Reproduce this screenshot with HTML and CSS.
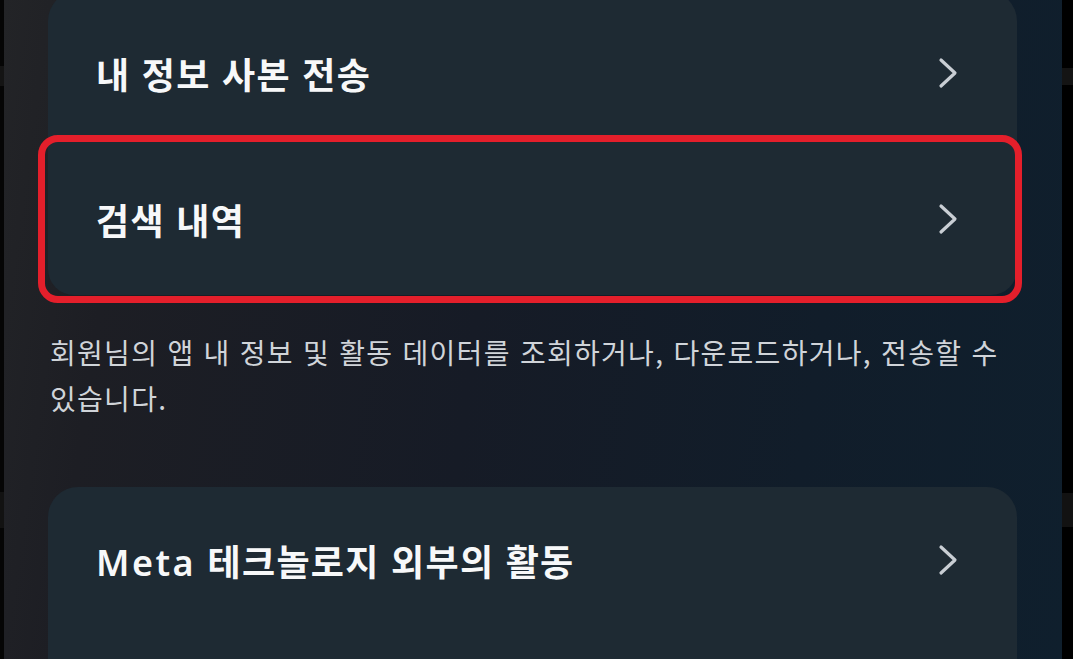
FILE: index.html
```html
<!DOCTYPE html>
<html lang="ko">
<head>
<meta charset="utf-8">
<title>내 정보</title>
<link rel="stylesheet" href="styles.css">
</head>
<body>
<div class="frame">
  <div class="edge edge-left"></div>
  <main class="screen">
    <section class="group">
      <a class="item item-first" href="#">
        <span class="item-title">내 정보 사본 전송</span>
        <svg class="chev" viewBox="0 0 20 32" width="20" height="32" aria-hidden="true"><path d="M3 3 L17 16 L3 29"/></svg>
      </a>
      <a class="item item-last" href="#">
        <span class="item-title">검색 내역</span>
        <svg class="chev" viewBox="0 0 20 32" width="20" height="32" aria-hidden="true"><path d="M3 3 L17 16 L3 29"/></svg>
        <span class="highlight"></span>
      </a>
    </section>
    <p class="desc">회원님의 앱 내 정보 및 활동 데이터를 조회하거나, 다운로드하거나, 전송할 수 있습니다.</p>
    <section class="group group-single">
      <a class="item item-solo" href="#">
        <span class="item-title"><span class="latin">Meta</span> 테크놀로지 외부의 활동</span>
        <svg class="chev" viewBox="0 0 20 32" width="20" height="32" aria-hidden="true"><path d="M3 3 L17 16 L3 29"/></svg>
      </a>
    </section>
  </main>
  <div class="edge edge-right"></div>
</div>
</body>
</html>
```

FILE: styles.css
```css
* { box-sizing: border-box; }

html, body {
  margin: 0;
  padding: 0;
  background: #000;
}

body {
  font-family: "Noto Sans CJK KR", "Noto Sans", sans-serif;
  width: 1073px;
  height: 659px;
  overflow: hidden;
}

.frame {
  display: flex;
  height: 659px;
}

.edge-left {
  width: 4px;
  background: linear-gradient(to bottom, #050505 0, #050505 66px, #141414 66px, #141414 86px, #050505 86px, #050505 492px, #121212 492px, #121212 528px, #050505 528px);
}

.edge-right {
  width: 11px;
  background: linear-gradient(to bottom, #000 0, #000 68px, #141414 68px, #141414 85px, #000 85px, #000 493px, #121212 493px, #121212 527px, #000 527px);
}

.screen {
  width: 1058px;
  height: 659px;
  padding: 0 45px 0 44px;
  background: linear-gradient(98deg, #232427 0%, #1d1e24 12%, #161b26 45%, #111d2a 75%, #0f1f2d 100%);
  display: flex;
  flex-direction: column;
}

.group {
  display: flex;
  flex-direction: column;
  margin-top: -9px;
  flex: none;
}

.group-single {
  margin-top: 66px;
}

.item {
  position: relative;
  display: flex;
  align-items: center;
  justify-content: space-between;
  height: 152px;
  padding: 0 59px 0 48px;
  background: #1e2a33;
  color: #f7f8f9;
  text-decoration: none;
}

.item-first {
  padding-top: 12px;
  border-radius: 30px 30px 0 0;
}

.item-last {
  border-radius: 0 0 26px 26px;
}

.item-solo {
  height: 172px;
  align-items: flex-start;
  padding-top: 50px;
  border-radius: 30px 30px 0 0;
}

.item-solo .chev {
  margin-top: 7px;
}

.item-title {
  font-size: 36px;
  font-weight: 600;
  line-height: 46px;
  letter-spacing: 1.3px;
}

.latin {
  font-family: "Noto Sans", "Noto Sans CJK KR", sans-serif;
  font-weight: 600;
  letter-spacing: 2.5px;
}

.chev {
  display: block;
  flex: none;
}

.chev path {
  fill: none;
  stroke: #c9ced4;
  stroke-width: 3.2;
  stroke-linecap: round;
  stroke-linejoin: round;
}

.highlight {
  position: absolute;
  top: -8px;
  left: -10px;
  right: -5px;
  bottom: -8px;
  border: 7px solid #e41f2b;
  border-radius: 20px;
  pointer-events: none;
}

.desc {
  margin: 34px 0 0 2px;
  font-size: 28px;
  line-height: 46px;
  letter-spacing: 1.3px;
  color: #d0d4d9;
  font-weight: 400;
  word-break: keep-all;
}
```
